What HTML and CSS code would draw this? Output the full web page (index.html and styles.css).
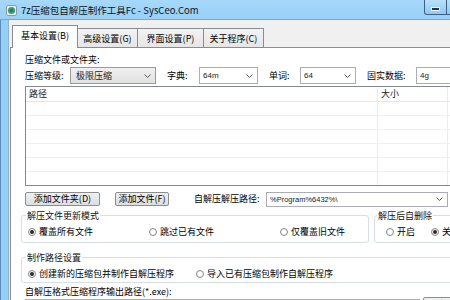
FILE: index.html
```html
<!DOCTYPE html>
<html lang="zh-CN">
<head>
  <meta charset="UTF-8" />
  <title>7z压缩包自解压制作工具Fc - SysCeo.Com</title>
  <link rel="stylesheet" href="styles.css">
</head>
<body>

  <div class="window">
    <!-- Title bar -->
    <div class="titlebar">
      <svg class="app-icon" width="11" height="11" viewBox="0 0 11 11">
        <rect x="0.5" y="0.5" width="10" height="10" rx="1.5" fill="#e9eef2" stroke="#8a9aa8"/>
        <circle cx="5.5" cy="5.5" r="3.6" fill="#3aa655"/>
        <circle cx="5.5" cy="5.5" r="1.8" fill="#2a6fb4"/>
      </svg>
      <span class="title">7z压缩包自解压制作工具Fc - SysCeo.Com</span>
      <div class="caption-btns">
        <span class="cap-btn min"><i></i></span>
        <span class="cap-btn max"><i></i></span>
        <span class="cap-btn close"></span>
      </div>
    </div>

    <div class="frame">
      <div class="frame-edge"></div>
      <div class="client">

        <!-- Tabs -->
        <div class="tabs">
          <span class="tab active t1">基本设置(B)</span>
          <span class="tab t2">高级设置(G)</span>
          <span class="tab t3">界面设置(P)</span>
          <span class="tab t4">关于程序(C)</span>
        </div>

        <div class="page">
          <div class="label">压缩文件或文件夹:</div>

          <div class="row options">
            <span class="lbl lbl-level">压缩等级:</span>
            <span class="combo grey c-level">极限压缩<svg width="7" height="4"><path d="M0.5 0.5L3.5 3.5L6.5 0.5" fill="none" stroke="#555"/></svg></span>
            <span class="lbl lbl-dict">字典:</span>
            <span class="combo c-dict">64m<svg width="7" height="4"><path d="M0.5 0.5L3.5 3.5L6.5 0.5" fill="none" stroke="#555"/></svg></span>
            <span class="lbl lbl-word">单词:</span>
            <span class="combo c-word">64<svg width="7" height="4"><path d="M0.5 0.5L3.5 3.5L6.5 0.5" fill="none" stroke="#555"/></svg></span>
            <span class="lbl lbl-solid">固实数据:</span>
            <span class="combo c-solid">4g<svg width="7" height="4"><path d="M0.5 0.5L3.5 3.5L6.5 0.5" fill="none" stroke="#555"/></svg></span>
          </div>

          <!-- File list -->
          <div class="listview">
            <div class="lv-row lv-head">
              <span class="cell col-path">路径</span>
              <span class="cell col-size">大小</span>
              <span class="cell col-rest"></span>
            </div>
            <div class="lv-row"><span class="cell col-path"></span><span class="cell col-size"></span><span class="cell col-rest"></span></div>
            <div class="lv-row"><span class="cell col-path"></span><span class="cell col-size"></span><span class="cell col-rest"></span></div>
            <div class="lv-row"><span class="cell col-path"></span><span class="cell col-size"></span><span class="cell col-rest"></span></div>
            <div class="lv-row"><span class="cell col-path"></span><span class="cell col-size"></span><span class="cell col-rest"></span></div>
            <div class="lv-row"><span class="cell col-path"></span><span class="cell col-size"></span><span class="cell col-rest"></span></div>
            <div class="lv-row"><span class="cell col-path"></span><span class="cell col-size"></span><span class="cell col-rest"></span></div>
          </div>

          <div class="row actions">
            <span class="btn b-folder">添加文件夹(D)</span>
            <span class="btn b-file">添加文件(F)</span>
            <span class="lbl lbl-path">自解压解压路径:</span>
            <span class="combo path c-path">%Program%6432%\<svg width="7" height="4"><path d="M0.5 0.5L3.5 3.5L6.5 0.5" fill="none" stroke="#555"/></svg></span>
          </div>

          <div class="groups">
            <fieldset class="group g-update">
              <legend>解压文件更新模式</legend>
              <div class="radios">
                <span class="radio-item r-w121"><span class="radio on"></span>覆盖所有文件</span>
                <span class="radio-item r-w131"><span class="radio"></span>跳过已有文件</span>
                <span class="radio-item"><span class="radio"></span>仅覆盖旧文件</span>
              </div>
            </fieldset>
            <fieldset class="group g-delete">
              <legend>解压后自删除</legend>
              <div class="radios">
                <span class="radio-item r-w45"><span class="radio"></span>开启</span>
                <span class="radio-item"><span class="radio on"></span>关闭</span>
              </div>
            </fieldset>
          </div>

          <fieldset class="group g-make">
            <legend>制作路径设置</legend>
            <div class="radios">
              <span class="radio-item r-w168"><span class="radio on"></span>创建新的压缩包并制作自解压程序</span>
              <span class="radio-item"><span class="radio"></span>导入已有压缩包制作自解压程序</span>
            </div>
          </fieldset>

          <div class="label out-label">自解压格式压缩程序输出路径(*.exe):</div>
          <div class="row output">
            <span class="textbox"></span>
            <span class="btn b-browse">浏览</span>
          </div>
        </div>

      </div>
    </div>
  </div>

</body>
</html>
```

FILE: styles.css
```css
body {
  margin: 0;
  width: 450px;
  height: 300px;
  overflow: hidden;
  font-family: "Noto Sans CJK SC", sans-serif;
  font-size: 9px;
  color: #000;
  background: #f0f0f0;
}
.window {
  width: 516px;
  height: 330px;
  display: flex;
  flex-direction: column;
}

/* title bar */
.titlebar {
  height: 19px;
  display: flex;
  align-items: flex-start;
  background: linear-gradient(#a6d8fa, #98d0f7);
  border-bottom: 1px solid #7da7cc;
}
.app-icon {
  margin: 5px 0 0 6px;
  flex-shrink: 0;
}
.title {
  margin: 4px 0 0 4px;
  font-size: 9.5px;
  line-height: 12px;
  color: #111;
  white-space: nowrap;
}
.caption-btns {
  margin-left: auto;
  margin-right: 6px;
  display: flex;
  flex-shrink: 0;
}
.cap-btn {
  height: 15px;
  box-sizing: border-box;
  border: 1px solid #3e5f80;
  border-top: none;
  background: linear-gradient(#b8e0fb, #8fcaf3);
  display: flex;
  align-items: center;
  justify-content: center;
}
.cap-btn.min {
  width: 23px;
  border-radius: 0 0 0 3px;
}
.cap-btn.min i {
  width: 7px;
  height: 2px;
  margin-top: 3px;
  background: #22364a;
  box-shadow: 0 0 0 1px #e8f4fc;
}
.cap-btn.max {
  width: 23px;
  margin-left: -1px;
}
.cap-btn.max i {
  width: 7px;
  height: 5px;
  border: 1px solid #22364a;
  border-top-width: 2px;
}
.cap-btn.close {
  width: 42px;
  margin-left: -1px;
  border-radius: 0 0 3px 0;
  background: linear-gradient(#e8a493, #c75050);
}

/* frame and client */
.frame {
  flex: 1;
  display: flex;
}
.frame-edge {
  width: 7px;
  border-left: 1px solid #5d8dbb;
  background: #96cff6;
}
.client {
  flex: 1;
  display: flex;
  flex-direction: column;
  border-left: 1px solid #8fb1cf;
  background: #f0f0f0;
  padding: 5px 0 0 1px;
}

/* tabs */
.tabs {
  display: flex;
  align-items: flex-end;
  height: 22px;
  padding-left: 2px;
  position: relative;
  z-index: 1;
}
.tab {
  box-sizing: border-box;
  height: 19px;
  margin-left: -1px;
  border: 1px solid #898c95;
  border-bottom: none;
  background: linear-gradient(#f3f3f3, #e6e6e6);
  display: flex;
  align-items: center;
  justify-content: center;
  line-height: 12px;
  padding-top: 2px;
}
.tab.active {
  height: 23px;
  margin-bottom: -1px;
  background: #fff;
  position: relative;
  z-index: 2;
  padding: 0 0 2px;
}
.t1 { width: 66px; margin-left: 0; }
.t2 { width: 61px; }
.t3 { width: 67px; }
.t4 { width: 61px; }

/* tab page */
.page {
  flex: 1;
  border: 1px solid #898c95;
  background: #fff;
  padding: 6px 0 0 14px;
}
.label {
  line-height: 12px;
}
.row {
  display: flex;
  align-items: center;
}
.options {
  margin-top: 1px;
  height: 17px;
}
.lbl {
  line-height: 12px;
}
.lbl-level { width: 45px; }
.lbl-dict { width: 32px; margin-left: 11px; }
.lbl-word { width: 31px; margin-left: 11px; }
.lbl-solid { width: 49px; margin-left: 11px; }
.lbl-path { width: 72px; margin-left: 25px; }

.combo {
  box-sizing: border-box;
  height: 17px;
  border: 1px solid #abadb3;
  background: #fff;
  display: flex;
  align-items: center;
  justify-content: space-between;
  padding: 0 4px 0 3px;
  font-family: "Liberation Sans", sans-serif;
  font-size: 8px;
  color: #222;
}
.combo.grey {
  font-family: "Noto Sans CJK SC", sans-serif;
  font-size: 9px;
  border-color: #9a9a9a;
  background: linear-gradient(#f0f0f0, #e2e2e2);
  padding-left: 5px;
}
.c-level { width: 86px; }
.c-dict { width: 59px; }
.c-word { width: 56px; }
.c-solid { width: 60px; }
.c-path { width: 182px; height: 15px; font-size: 7.5px; }

/* list view */
.listview {
  margin-top: 2px;
  width: 460px;
  height: 100px;
  box-sizing: border-box;
  border: 1px solid #828790;
  overflow: hidden;
}
.lv-row {
  display: flex;
  height: 14px;
  box-sizing: border-box;
  border-bottom: 1px solid #f0f0f0;
}
.lv-head {
  height: 15px;
  border-bottom: 1px solid #e5e5e5;
  align-items: center;
  color: #222;
}
.cell {
  box-sizing: border-box;
  height: 100%;
  border-right: 1px solid #ececec;
  padding-left: 3px;
  line-height: 14px;
}
.col-path { width: 352px; }
.col-size { width: 70px; }
.col-rest { flex: 1; border-right: none; }

/* buttons */
.actions {
  margin-top: 6px;
  height: 14px;
}
.btn {
  box-sizing: border-box;
  height: 14px;
  border: 1px solid #8c8c8c;
  border-radius: 2px;
  background: linear-gradient(#eef0f2, #dcdfe2);
  display: flex;
  align-items: center;
  justify-content: center;
  line-height: 12px;
}
.b-folder { width: 75px; }
.b-file { width: 54px; margin-left: 15px; }

/* group boxes */
.groups {
  display: flex;
  margin: 4px 0 0 -4px;
}
.group {
  margin: 0;
  padding: 5px 0 4px 0;
  border: 1px solid #d5dfe5;
  border-radius: 3px;
  min-width: 0;
}
.group legend {
  padding: 0 1px;
  line-height: 11px;
  color: #111;
}
.g-update { width: 348px; box-sizing: border-box; padding-left: 6px; }
.g-update legend { margin-left: -2px; }
.g-delete { flex: 1; margin-left: 5px; padding-left: 11px; }
.g-delete legend { margin-left: -9px; }
.g-make {
  margin: 9px 0 0 -4px;
  padding: 5px 0 2px 6px;
}
.g-make legend { margin-left: -2px; }
.radios {
  display: flex;
  align-items: center;
  height: 12px;
}
.radio-item {
  display: flex;
  align-items: center;
  line-height: 12px;
  white-space: nowrap;
}
.r-w121 { width: 121px; }
.r-w131 { width: 131px; }
.r-w45 { width: 45px; }
.r-w168 { width: 168px; }
.radio {
  box-sizing: border-box;
  width: 8px;
  height: 8px;
  margin-right: 3px;
  border: 1px solid #8a8a8a;
  border-radius: 50%;
  background: radial-gradient(circle, #fff 40%, #e6e6e6);
  display: flex;
  align-items: center;
  justify-content: center;
}
.radio.on::after {
  content: "";
  width: 4px;
  height: 4px;
  border-radius: 50%;
  background: #2b2b2b;
}

/* output path */
.out-label {
  margin-top: 3px;
}
.output {
  margin-top: 1px;
  align-items: flex-start;
}
.textbox {
  box-sizing: border-box;
  width: 395px;
  height: 16px;
  border: 1px solid #abadb3;
  background: #fff;
}
.b-browse {
  width: 40px;
  height: 16px;
  margin-left: 3px;
  margin-top: -2px;
}
```
